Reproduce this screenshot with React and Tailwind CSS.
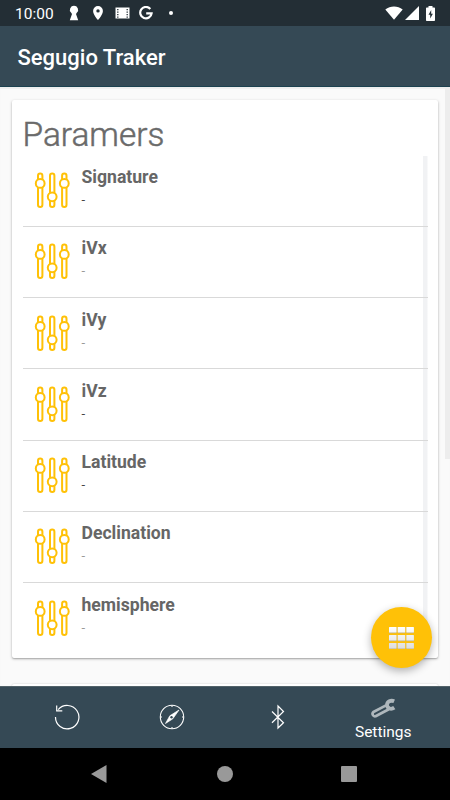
const parameters = [
  { name: 'Signature', tone: 'text-[#444]' },
  { name: 'iVx', tone: 'text-[#999]' },
  { name: 'iVy', tone: 'text-[#999]' },
  { name: 'iVz', tone: 'text-[#444]' },
  { name: 'Latitude', tone: 'text-[#444]' },
  { name: 'Declination', tone: 'text-[#999]' },
  { name: 'hemisphere', tone: 'text-[#999]' },
];

function Sliders() {
  return (
    <svg viewBox="0 0 36 38" className="h-[38px] w-9 shrink-0 overflow-visible" fill="white" stroke="#ffc107" strokeWidth="2">
      <rect x="3" y="1.6" width="4.4" height="33.4" rx="2.2" />
      <rect x="15" y="1.6" width="4.4" height="33.4" rx="2.2" />
      <rect x="27.1" y="1.6" width="4.4" height="33.4" rx="2.2" />
      <circle cx="5.2" cy="11.4" r="4.4" />
      <circle cx="17.2" cy="24.8" r="4.4" />
      <circle cx="29.3" cy="11.4" r="4.4" />
    </svg>
  );
}

function StatusBar() {
  return (
    <div className="flex h-[26px] shrink-0 items-center bg-[#232e35] pl-[15px] pr-[15px] text-white">
      <span className="w-[54px] pt-[3px] text-[15.5px] leading-none">10:00</span>
      <svg viewBox="0 0 10 16" className="h-4 w-[10px]" fill="white">
        <path d="M5 .7a4.1 4.1 0 0 0-3 6.9L3 9 .8 15.3h8.4L7 9l1-1.4A4.1 4.1 0 0 0 5 .7Z" />
      </svg>
      <svg viewBox="0 0 10 14" className="ml-[14px] h-[14px] w-[10px]" fill="white">
        <path fillRule="evenodd" d="M5 0a4.9 4.9 0 0 0-4.9 4.9C.1 8.5 5 14 5 14s4.9-5.5 4.9-9.1A4.9 4.9 0 0 0 5 0Zm0 3.2a1.7 1.7 0 1 1 0 3.4 1.7 1.7 0 0 1 0-3.4Z" />
      </svg>
      <svg viewBox="0 0 15 12" className="ml-3 h-3 w-[15px]">
        <path d="M.5.5h14v11H.5z" fill="white" />
        <path d="M2.8 2v9M12.2 2v9" stroke="#232e35" strokeWidth="1.3" strokeDasharray="1.3 1.2" />
      </svg>
      <svg viewBox="0 0 14 14" className="ml-[9px] h-[14px] w-[14px]" fill="none" stroke="white" strokeWidth="2.2">
        <path d="M11.3 3A5.7 5.7 0 1 0 12.6 7.3H7.2" />
      </svg>
      <span className="ml-[16px] size-1 rounded-full bg-white" />
      <svg viewBox="0 0 18 14" className="ml-auto h-[14px] w-[18px]" fill="white">
        <path d="M.3 3.5C5.3-.6 12.7-.6 17.7 3.5L9 13.7Z" />
      </svg>
      <svg viewBox="0 0 14 14" className="ml-[2px] h-[14px] w-[14px]" fill="white">
        <path d="M14 0v14H0Z" />
      </svg>
      <svg viewBox="0 0 9 15" className="ml-[7px] h-[15px] w-[9px]">
        <path d="M2.5 0h4v1.5H8c.6 0 1 .4 1 1V14c0 .6-.4 1-1 1H1c-.6 0-1-.4-1-1V2.5c0-.6.4-1 1-1h1.5Z" fill="white" />
        <path d="M5.2 4 2.5 8.7h1.7v3.8l2.7-4.8H5.2Z" fill="#232e35" />
      </svg>
    </div>
  );
}

function Card() {
  return (
    <section className="ml-3 mt-[13px] h-[558px] w-[426px] shrink-0 rounded-[2px] bg-white pl-[10.5px] pt-[15px] shadow-[0_1px_3px_rgba(0,0,0,0.28),0_1px_1px_rgba(0,0,0,0.12)]">
      <h1 className="h-[40.5px] text-[33.4px] font-light leading-10 text-[#6a6a6a] [-webkit-text-stroke:0.5px_#6a6a6a]">
        Paramers
      </h1>
      <div className="flex h-[493px] w-[405px] overflow-hidden bg-[linear-gradient(#f1f2f4,#f1f2f4)] bg-[length:4.5px_100%] bg-right bg-no-repeat">
        <ul className="w-full">
          {parameters.map((item, i) => (
            <li
              key={item.name}
              className={
                'flex h-[71.25px] pl-3 pt-[16.5px] ' +
                (i < parameters.length - 1 ? 'border-b border-[#d9d9d9]' : '')
              }
            >
              <Sliders />
              <div className="-mt-[5px] ml-[11px]">
                <div className="text-[17.6px] font-bold leading-[21px] text-[#666]">{item.name}</div>
                <div className={'text-[13px] leading-[24px] ' + item.tone}>-</div>
              </div>
            </li>
          ))}
        </ul>
      </div>
    </section>
  );
}

function TabBar() {
  return (
    <nav className="flex h-[62px] shrink-0 border-t border-[#526269] bg-[#354955] px-[14px] text-white">
      <div className="flex flex-1 items-center justify-center pb-[2px]">
        <svg viewBox="0 0 26 26" className="size-[26px]" fill="none" stroke="white" strokeWidth="1.2">
          <path d="M1.5 13A11.7 11.7 0 1 0 4.2 5.7M2.7 1.5v5.3h5.6" />
        </svg>
      </div>
      <div className="flex flex-1 items-center justify-center pb-[2px]">
        <svg viewBox="0 0 26 26" className="size-[26px]" fill="none" stroke="white" strokeWidth="1.1">
          <circle cx="13" cy="13" r="11.7" />
          <path d="M13 1.5v1.5M13 23v1.5M1.5 13H3M23 13h1.5" />
          <path d="M20 6 10.8 11.8 6.5 19.5 13.8 14.8Z" fill="white" strokeWidth=".7" />
          <circle cx="12.5" cy="13.2" r="1.2" fill="#354955" stroke="none" />
        </svg>
      </div>
      <div className="flex flex-1 items-center justify-center pb-[2px]">
        <svg viewBox="0 0 14 26" className="h-[26px] w-[14px]" fill="none" stroke="white" strokeWidth="1.2">
          <path d="m1 7.5 11.5 11.2L7 24V2l5.5 5.5L1 18.7" />
        </svg>
      </div>
      <div className="flex flex-1 flex-col items-center pt-[11px]">
        <svg viewBox="0 0 26 22" className="h-[22px] w-[26px]" fill="none" stroke="#aeb7bc" strokeLinejoin="round">
          <path d="M16 7.4 3.4 14a2.5 2.5 0 0 0 2.2 4.3L18.8 11.3" strokeWidth="2.7" />
          <path d="M16 6.5 20 11" strokeWidth="3" />
          <path d="M24.2 3.3C20.8 1.8 17 3.6 17 7 17.1 10.6 21 11.9 24.3 9.7" strokeWidth="3.8" />
        </svg>
        <span className="text-[15.5px] leading-6">Settings</span>
      </div>
    </nav>
  );
}

export default function App() {
  return (
    <div className="relative flex h-[800px] w-[450px] flex-col overflow-hidden bg-black font-['Roboto',sans-serif]">
      <StatusBar />
      <header className="flex h-[61px] shrink-0 items-center border-b border-[#1c414f] bg-[#354955] pl-[17.5px] pt-[3px] text-[22px] font-medium text-white">
        Segugio Traker
      </header>
      <main className="flex h-[599px] shrink-0 justify-between overflow-hidden bg-[#fafafa] shadow-[inset_0_2px_1px_rgba(0,0,0,0.05)]">
        <div className="flex flex-col">
          <Card />
          <div className="ml-3 mt-[26px] h-10 w-[426px] shrink-0 rounded-[2px] bg-white shadow-[0_0_2px_rgba(0,0,0,0.2)]" />
        </div>
        <div className="h-[372px] w-[5px] bg-[#ededed]" />
      </main>
      <TabBar />
      <div className="flex flex-1 items-center bg-black pl-[91px]">
        <svg viewBox="0 0 16 18" className="h-[18px] w-4" fill="#999">
          <path d="M0 9 15.5 0v18Z" />
        </svg>
        <div className="ml-[110px] size-4 rounded-full bg-[#999]" />
        <div className="ml-[108px] size-4 rounded-[1px] bg-[#999]" />
      </div>
      <button
        aria-label="Menu"
        className="absolute left-[371px] top-[607px] flex size-[61px] items-center justify-center rounded-full bg-[#ffc107] shadow-[0_3px_8px_rgba(0,0,0,0.3)]"
      >
        <svg viewBox="0 0 25 22" className="h-[22px] w-[25px]">
          <defs>
            <linearGradient id="tile" x1="0" y1="0" x2="0" y2="22" gradientUnits="userSpaceOnUse">
              <stop stopColor="#fff" />
              <stop offset="1" stopColor="#ddd" />
            </linearGradient>
          </defs>
          {[0, 8, 16].map((y) =>
            [0, 8.7, 17.4].map((x) => (
              <g key={x + '-' + y}>
                <rect x={x} y={y} width="7.5" height="6.3" rx="0.5" fill="#bfb48b" />
                <rect x={x} y={y} width="7.5" height="5.6" rx="0.5" fill="url(#tile)" />
              </g>
            ))
          )}
        </svg>
      </button>
    </div>
  );
}
